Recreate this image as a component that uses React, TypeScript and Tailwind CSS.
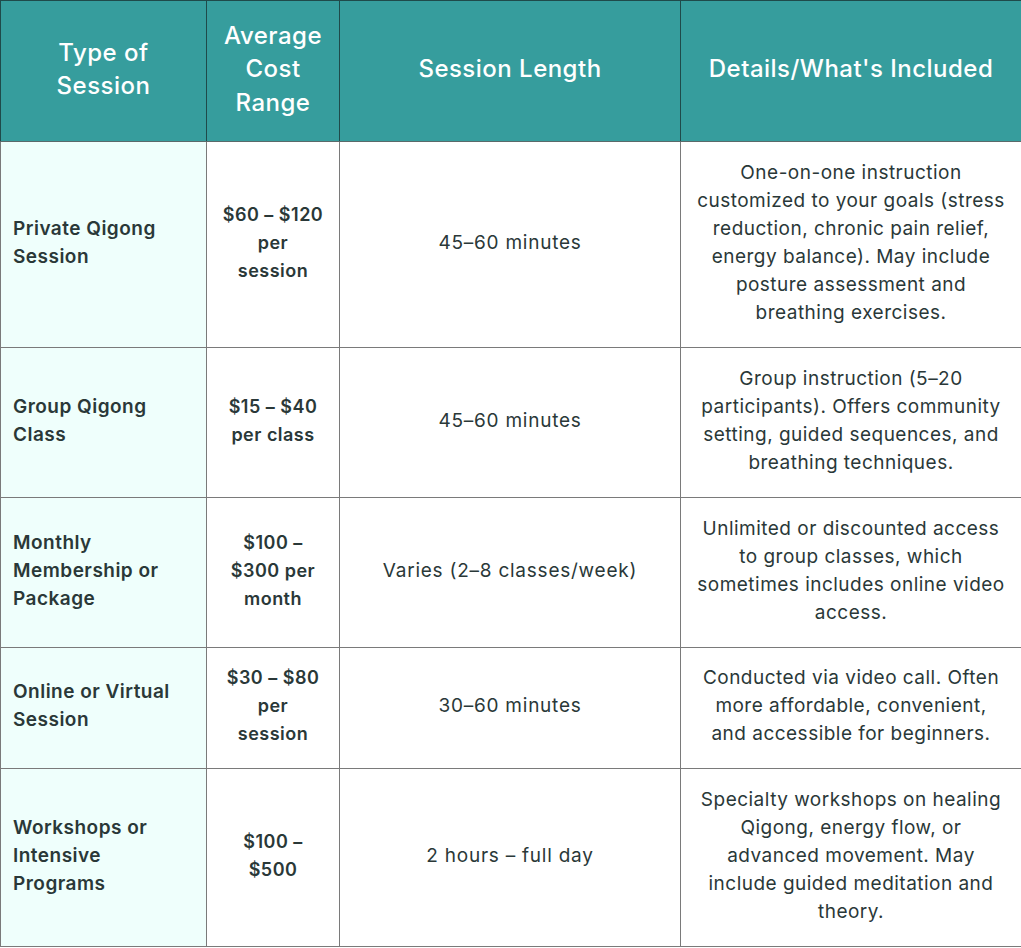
import React from "react";

const rows = [
  {
    type: ["Private Qigong", "Session"],
    cost: ["$60 – $120", "per", "session"],
    len: ["45–60 minutes"],
    det: [
      "One-on-one instruction",
      "customized to your goals (stress",
      "reduction, chronic pain relief,",
      "energy balance). May include",
      "posture assessment and",
      "breathing exercises.",
    ],
    h: "h-[206px]",
  },
  {
    type: ["Group Qigong", "Class"],
    cost: ["$15 – $40", "per class"],
    len: ["45–60 minutes"],
    det: [
      "Group instruction (5–20",
      "participants). Offers community",
      "setting, guided sequences, and",
      "breathing techniques.",
    ],
    h: "h-[150px]",
  },
  {
    type: ["Monthly", "Membership or", "Package"],
    cost: ["$100 –", "$300 per", "month"],
    len: ["Varies (2–8 classes/week)"],
    det: [
      "Unlimited or discounted access",
      "to group classes, which",
      "sometimes includes online video",
      "access.",
    ],
    h: "h-[150px]",
  },
  {
    type: ["Online or Virtual", "Session"],
    cost: ["$30 – $80", "per", "session"],
    len: ["30–60 minutes"],
    det: [
      "Conducted via video call. Often",
      "more affordable, convenient,",
      "and accessible for beginners.",
    ],
    h: "h-[121px]",
  },
  {
    type: ["Workshops or", "Intensive", "Programs"],
    cost: ["$100 –", "$500"],
    len: ["2 hours – full day"],
    det: [
      "Specialty workshops on healing",
      "Qigong, energy flow, or",
      "advanced movement. May",
      "include guided meditation and",
      "theory.",
    ],
    h: "h-[178px]",
  },
];

function Lines({ lines }: { lines: string[] }) {
  return (
    <>
      {lines.map((l, i) => (
        <div key={i} className="whitespace-nowrap">
          {l}
        </div>
      ))}
    </>
  );
}

export default function App() {
  return (
    <div className="w-[1021px] h-[948px] bg-white" style={{ fontFamily: "Inter, 'Noto Sans', sans-serif" }}>
      <table className="border-collapse table-fixed w-[1021px] text-[#2a3838]">
        <colgroup>
          <col className="w-[206px]" />
          <col className="w-[133px]" />
          <col className="w-[341px]" />
          <col className="w-[341px]" />
        </colgroup>
        <thead>
          <tr className="h-[141px] bg-[#369d9d] text-white text-[24px] leading-[33.5px] tracking-[0.02em]">
            <th className="border border-[#1f4a4a] border-b-[#5a6a6a] px-2 pb-1 font-medium">
              <Lines lines={["Type of", "Session"]} />
            </th>
            <th className="border border-[#1f4a4a] border-b-[#5a6a6a] px-1 pb-1 font-medium">
              <Lines lines={["Average", "Cost", "Range"]} />
            </th>
            <th className="border border-[#1f4a4a] border-b-[#5a6a6a] px-3 pb-1 font-medium">Session Length</th>
            <th className="border border-[#1f4a4a] border-b-[#5a6a6a] px-3 pb-1 font-medium">Details/What's Included</th>
          </tr>
        </thead>
        <tbody className="leading-[28px] tracking-[0.03em]">
          {rows.map((r) => (
            <tr key={r.type.join(" ")} className={r.h}>
              <td className="border border-[#7a7a7a] bg-[#effffc] px-3 pb-1 text-[19px] font-semibold text-left align-middle">
                <Lines lines={r.type} />
              </td>
              <td className="border border-[#7a7a7a] px-1 pb-1 text-[18px] font-semibold text-center align-middle">
                <Lines lines={r.cost} />
              </td>
              <td className="border border-[#7a7a7a] px-3 pb-1 text-[19px] tracking-[0.04em] text-center align-middle">
                <Lines lines={r.len} />
              </td>
              <td className="border border-[#7a7a7a] px-1 pb-1 text-[19px] text-center align-middle">
                <Lines lines={r.det} />
              </td>
            </tr>
          ))}
        </tbody>
      </table>
    </div>
  );
}
